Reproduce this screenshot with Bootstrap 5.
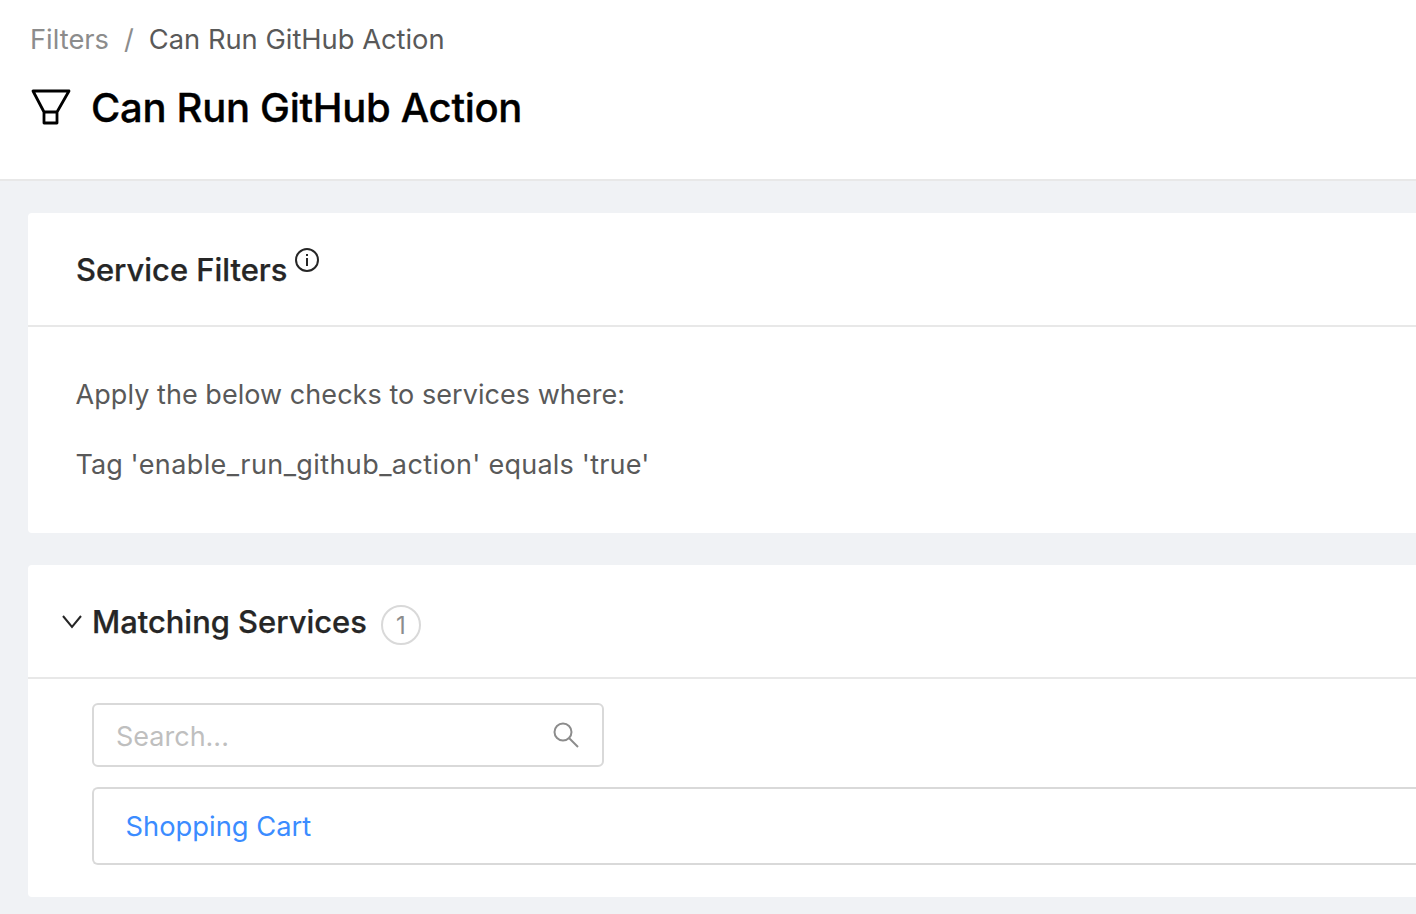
<!DOCTYPE html>
<html><head><meta charset="utf-8">
<link href="https://cdn.jsdelivr.net/npm/bootstrap@5.3.0/dist/css/bootstrap.min.css" rel="stylesheet">
<style>
html,body{height:914px;overflow:hidden}
body{background:#f0f2f5;font-family:Inter,"Liberation Sans",sans-serif;color:#262626}
.page-head{background:#fff;height:181px;border-bottom:2px solid #e8e8e8;padding:23px 30px 0}
.crumbs{font-size:27.3px;line-height:34px;color:#8c8c8c;gap:15px}
.crumbs .cur{color:#595959}
.title-row{margin-top:20px;gap:20px;height:62px}
.title-row svg{margin-left:1px;margin-top:-3px}
.title-row h1{font-size:40px;font-weight:500;margin:0;color:#000;line-height:62px;letter-spacing:-.3px;-webkit-text-stroke:.35px #000}
.panel{background:#fff;margin-left:28px;border-radius:4px 0 0 4px}
.panel-a{margin-top:32px;height:320px}
.panel-b{margin-top:32px;height:332px}
.panel-h{height:114px;border-bottom:2px solid #e8e8e8}
.panel-h h2{font-size:30.9px;font-weight:500;margin:0;color:#262626;line-height:1;-webkit-text-stroke:.25px #262626}
.panel-a .panel-h{padding:42px 0 0 48px}
.info{gap:7px}
.info svg{margin-top:-8px}
.body-a{padding:50px 48px 0 47.6px;font-size:27px;line-height:36px;color:#595959;letter-spacing:.05px}
.body-a p{margin:0 0 34px}
.tag-name{letter-spacing:.4px}
.tail{letter-spacing:.22px}
.panel-b .panel-h{padding:42px 0 0 34px;gap:10px}
.panel-b .panel-h svg{margin-top:-2px}
.count{width:40px;height:40px;border:2px solid #d9d9d9;border-radius:50%;color:#8c8c8c;font-size:24px;margin-left:4px;margin-top:-2px;padding-top:2px}
.body-b{padding:24px 0 0 64px}
.search{width:512px;height:64px;border:2px solid #d9d9d9;border-radius:6px;padding:5px 22px 0;font-size:27px;color:#bfbfbf}
.search svg{margin-top:-5px}
.svc{margin-top:20px;height:78px;border:2px solid #d9d9d9;border-right:0;border-radius:6px 0 0 6px;padding:2px 0 0 31.6px;font-size:27.3px}
.svc a{color:#3b8cff;text-decoration:none}
</style></head><body>
<header class="page-head">
<nav class="crumbs d-flex align-items-center"><span>Filters</span><span>/</span><span class="cur">Can Run GitHub Action</span></nav>
<div class="title-row d-flex align-items-center">
<svg width="40" height="36" viewBox="0 0 40 36" fill="none" stroke="#000" stroke-width="2.8" stroke-linejoin="round"><path d="M2 2h36L26 23v11H13V23zM13 23h13"/></svg>
<h1>Can Run GitHub Action</h1></div>
</header>
<section class="panel panel-a">
<div class="panel-h"><div class="info d-flex"><h2>Service Filters</h2>
<svg class="align-self-start" width="26" height="26" viewBox="0 0 26 26" fill="none" stroke="#262626" stroke-width="2"><circle cx="13" cy="13" r="11"/><path d="M13 11v8M13 7v2"/></svg></div></div>
<div class="body-a"><p>Apply the below checks to services where:</p><p>Tag <span class="tag-name">'enable_run_github_action'</span> <span class="tail">equals 'true'</span></p></div>
</section>
<section class="panel panel-b">
<div class="panel-h d-flex align-items-start">
<svg width="20" height="32" viewBox="0 0 20 32" fill="none" stroke="#262626" stroke-width="2"><path d="M1 11l9 11 9-11"/></svg>
<h2>Matching Services</h2><span class="count d-flex align-items-center justify-content-center">1</span></div>
<div class="body-b">
<div class="search d-flex align-items-center justify-content-between"><span>Search...</span>
<svg width="28" height="28" viewBox="0 0 28 28" fill="none" stroke="#8c8c8c" stroke-width="2"><circle cx="11" cy="11" r="8.5"/><path d="M17 17l9 9"/></svg></div>
<div class="svc d-flex align-items-center"><a href="#">Shopping Cart</a></div>
</div>
</section>
<script src="https://cdn.jsdelivr.net/npm/bootstrap@5.3.0/dist/js/bootstrap.bundle.min.js"></script>
</body></html>
